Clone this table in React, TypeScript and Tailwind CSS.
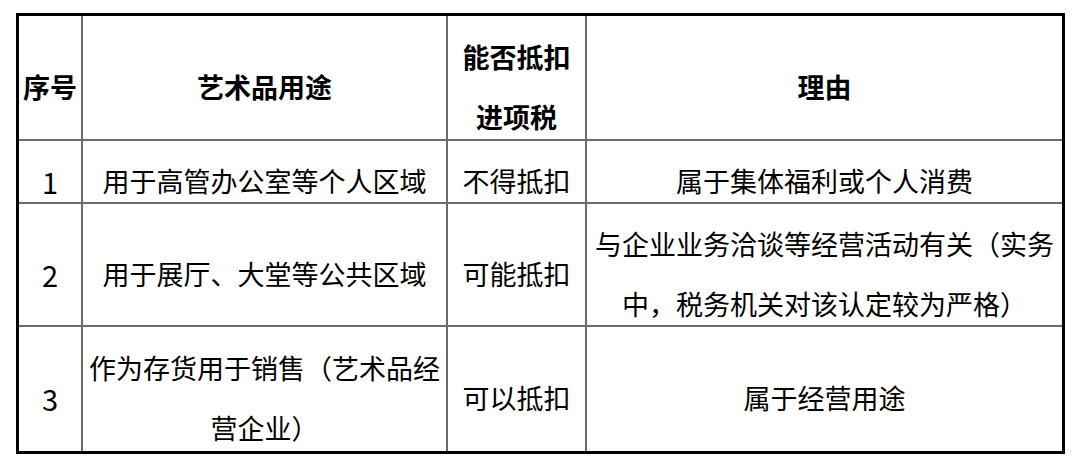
import React from "react";

type CellProps = {
  children: React.ReactNode;
  right?: boolean;
  bottom?: boolean;
  bold?: boolean;
  num?: boolean;
};

function Cell({ children, right = true, bottom = true, bold = false, num = false }: CellProps) {
  return (
    <div
      className={
        "flex items-center justify-center text-center border-[#6b6b6b] " +
        (right ? "border-r-2 " : "") +
        (bottom ? "border-b-2 " : "") +
        (num ? "text-[29px] " : "") +
        (bold ? "font-bold" : "font-normal")
      }
    >
      <div className="translate-y-[9px] leading-[60px] whitespace-nowrap">{children}</div>
    </div>
  );
}

export default function App() {
  return (
    <div className="w-[1080px] h-[468px] bg-white pt-[13px] pl-[16px] text-black font-['Noto_Sans_CJK_SC','Noto_Sans',sans-serif] text-[27px]">
      <div className="w-[1049px] border-[3px] border-black grid grid-cols-[64px_365px_139px_475px] grid-rows-[125px_63px_123px_124px]">
        <Cell bold>序号</Cell>
        <Cell bold>艺术品用途</Cell>
        <Cell bold>
          能否抵扣
          <br />
          进项税
        </Cell>
        <Cell bold right={false}>理由</Cell>

        <Cell num>1</Cell>
        <Cell>用于高管办公室等个人区域</Cell>
        <Cell>不得抵扣</Cell>
        <Cell right={false}>属于集体福利或个人消费</Cell>

        <Cell num>2</Cell>
        <Cell>用于展厅、大堂等公共区域</Cell>
        <Cell>可能抵扣</Cell>
        <Cell right={false}>
          与企业业务洽谈等经营活动有关（实务
          <br />
          中，税务机关对该认定较为严格）
        </Cell>

        <Cell num bottom={false}>3</Cell>
        <Cell bottom={false}>
          作为存货用于销售（艺术品经
          <br />
          营企业）
        </Cell>
        <Cell bottom={false}>可以抵扣</Cell>
        <Cell bottom={false} right={false}>属于经营用途</Cell>
      </div>
    </div>
  );
}
